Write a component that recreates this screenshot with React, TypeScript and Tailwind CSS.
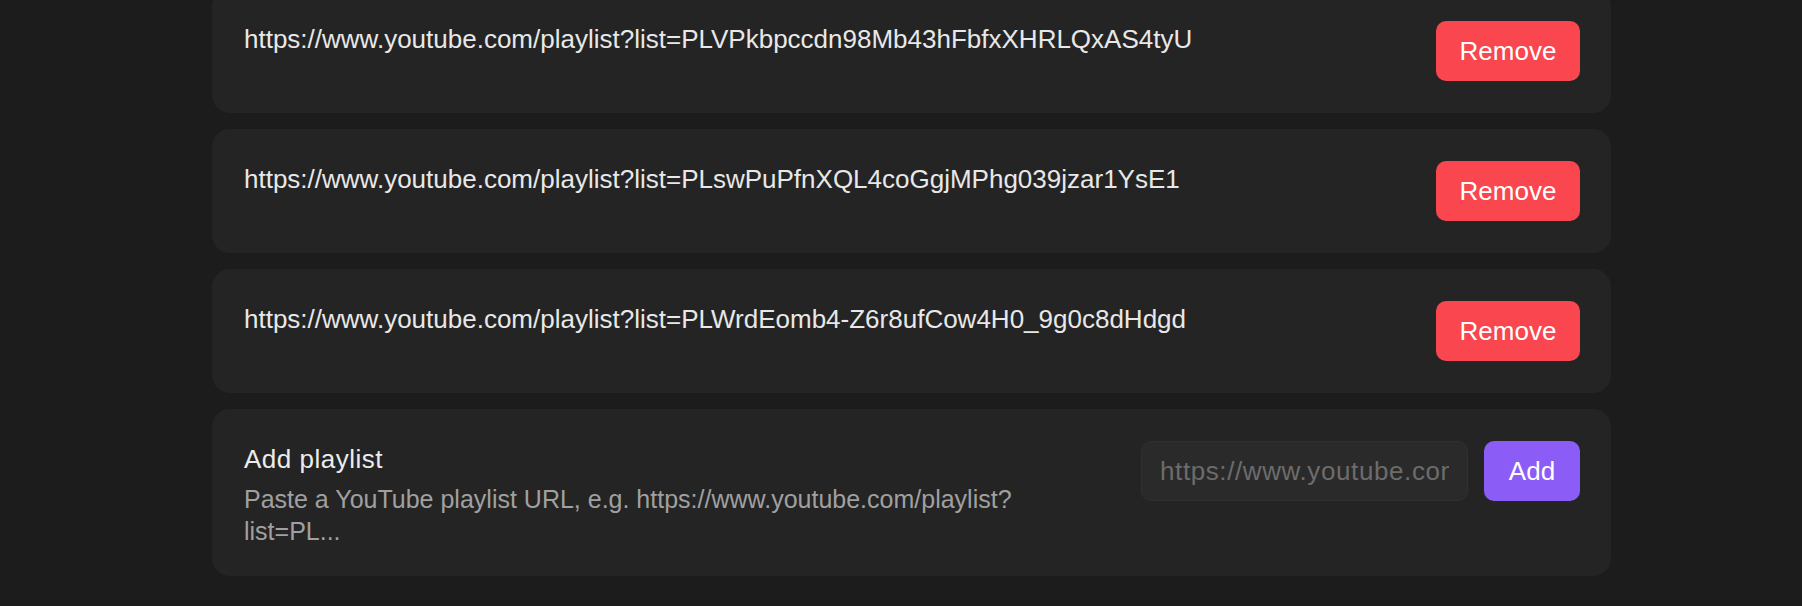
import React from "react";

const playlists = [
  "https://www.youtube.com/playlist?list=PLVPkbpccdn98Mb43hFbfxXHRLQxAS4tyU",
  "https://www.youtube.com/playlist?list=PLswPuPfnXQL4coGgjMPhg039jzar1YsE1",
  "https://www.youtube.com/playlist?list=PLWrdEomb4-Z6r8ufCow4H0_9g0c8dHdgd",
];

export default function App() {
  return (
    <div
      className="w-[1802px] h-[606px] overflow-hidden bg-[#1c1c1c] text-[#e6e6e6]"
      style={{ fontFamily: '"Liberation Sans", Arial, sans-serif' }}
    >
      <div className="ml-[212px] w-[1399px] -mt-[11px] flex flex-col gap-[16px]">
        {playlists.map((url) => (
          <div
            key={url}
            className="flex items-start justify-between gap-6 rounded-[18px] bg-[#242424] p-[32px] pr-[31px]"
          >
            <div className="text-[26px] leading-[36px] text-[#e8e8e8]">{url}</div>
            <button className="h-[60px] w-[144px] rounded-[10px] bg-[#f9464f] text-[26px] text-white">
              Remove
            </button>
          </div>
        ))}
        <div className="flex items-start justify-between gap-6 rounded-[18px] bg-[#242424] px-[32px] pr-[31px] pt-[32px] pb-[29px]">
          <div className="flex-1 max-w-[820px]">
            <div className="text-[26px] leading-[36px] tracking-[0.5px] text-[#ececec]">Add playlist</div>
            <div className="mt-[6px] text-[25px] leading-[32px] text-[#a0a0a0]">
              Paste a YouTube playlist URL, e.g. https://www.youtube.com/playlist?<wbr />list=PL...
            </div>
          </div>
          <div className="flex items-center gap-[16px]">
            <input
              placeholder="https://www.youtube.com/playlist?list=..."
              className="h-[60px] w-[327px] rounded-[10px] border border-[#303030] bg-[#2a2a2a] pl-[18px] pr-[18px] text-[26px] tracking-[0.6px] text-[#e8e8e8] outline-none placeholder:text-[#6c6c6c]"
            />
            <button className="h-[60px] w-[96px] rounded-[10px] bg-[#8b5cf6] text-[26px] text-white">
              Add
            </button>
          </div>
        </div>
      </div>
    </div>
  );
}
